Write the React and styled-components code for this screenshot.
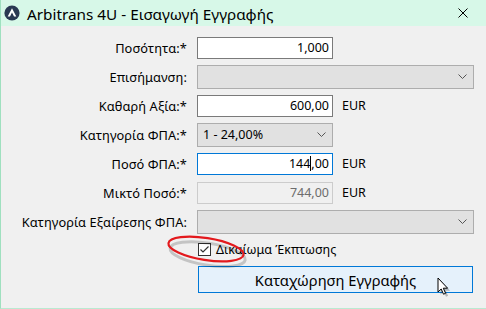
import React from "react";
import styled, { createGlobalStyle } from "styled-components";

const Global = createGlobalStyle`
  html, body { margin: 0; padding: 0; background: #f0f0f0; }
  body { font-family: "Noto Sans", "Open Sans", sans-serif; }
`;

const Window = styled.div`
  position: relative;
  width: 486px;
  height: 309px;
  box-sizing: border-box;
  border-left: 1px solid #9fe0bf;
  border-bottom: 1px solid #b9ead1;
  background: #f0f0f0;
  overflow: hidden;
`;

const TitleBar = styled.div`
  height: 26px;
  background: #d7f8e8;
  display: flex;
  align-items: center;
  padding-left: 3px;
`;

const TitleText = styled.div`
  font-family: "Noto Sans", sans-serif;
  font-size: 15.3px;
  color: #000;
  margin-left: 7px;
  margin-top: 1px;
  flex: 1;
`;

const CloseBtn = styled.div`
  width: 46px;
  height: 26px;
  display: flex;
  align-items: center;
  justify-content: center;
`;

const Form = styled.div`
  padding-top: 7px;
  display: flex;
  flex-direction: column;
`;

const Row = styled.div`
  height: 29px;
  display: flex;
  align-items: center;
`;

const Label = styled.div`
  width: 186px;
  text-align: right;
  font-size: 12.8px;
  letter-spacing: 0.1px;
  color: #000;
  margin-right: 10px;
  white-space: nowrap;
`;

const Input = styled.div`
  box-sizing: border-box;
  width: 136px;
  height: 22px;
  background: ${(p) => (p.$disabled ? "#f0f0f0" : "#fff")};
  border: 1px solid ${(p) => (p.$focus ? "#0078d7" : p.$disabled ? "#cccccc" : "#7a7a7a")};
  color: ${(p) => (p.$disabled ? "#6d6d6d" : "#000")};
  font-size: 12.5px;
  display: flex;
  align-items: center;
  justify-content: flex-end;
  padding-right: 3px;
`;

const Caret = styled.span`
  display: inline-block;
  width: 1px;
  height: 15px;
  background: #000;
`;

const Select = styled.div`
  box-sizing: border-box;
  width: ${(p) => (p.$wide ? "277px" : "136px")};
  height: 24px;
  background: #e1e1e1;
  border: 1px solid #adadad;
  font-size: 12.5px;
  color: #000;
  display: flex;
  align-items: center;
  padding-left: 5px;
  padding-right: 6px;
`;

const SelectText = styled.span`
  flex: 1;
`;

const Unit = styled.span`
  font-size: 12.5px;
  color: #000;
  margin-left: 9px;
`;

const CheckRow = styled.div`
  height: 27px;
  display: flex;
  align-items: center;
  padding-left: 197px;
`;

const Box = styled.div`
  box-sizing: border-box;
  width: 13px;
  height: 13px;
  border: 1px solid #333;
  background: #fff;
  display: flex;
  align-items: center;
  justify-content: center;
`;

const CheckLabel = styled.span`
  font-size: 12.5px;
  color: #000;
  margin-left: 5px;
`;

const ButtonRow = styled.div`
  padding-left: 197px;
  margin-top: 3px;
`;

const Button = styled.div`
  box-sizing: border-box;
  width: 275px;
  height: 27px;
  background: #e5f1fb;
  border: 1px solid #0078d7;
  display: flex;
  align-items: center;
  justify-content: center;
  font-size: 14.7px;
  color: #000;
`;

const Annotation = styled.svg`
  position: absolute;
  left: 160px;
  top: 228px;
  pointer-events: none;
`;

const Cursor = styled.svg`
  position: absolute;
  left: 435px;
  top: 276px;
`;

const Chevron = () => (
  <svg width="9" height="5" viewBox="0 0 9 5">
    <path d="M0.5 0.5 L4.5 4.5 L8.5 0.5" fill="none" stroke="#555" strokeWidth="1" />
  </svg>
);

export default function App() {
  return (
    <>
      <Global />
      <Window>
        <TitleBar>
          <svg width="16" height="16" viewBox="0 0 16 16">
            <circle cx="8" cy="8" r="7.6" fill="#2a3852" />
            <path d="M8 3.2 L12.3 11.6 L10 11.6 L8 7.6 L6 11.6 L3.7 11.6 Z" fill="#fff" />
            <path d="M6.6 11.6 L9.4 11.6 L8 9 Z" fill="#2a3852" />
          </svg>
          <TitleText>Arbitrans 4U - Εισαγωγή Εγγραφής</TitleText>
          <CloseBtn>
            <svg width="10" height="10" viewBox="0 0 10 10">
              <path d="M0.5 0.5 L9.5 9.5 M9.5 0.5 L0.5 9.5" stroke="#000" strokeWidth="1" />
            </svg>
          </CloseBtn>
        </TitleBar>
        <Form>
          <Row>
            <Label>Ποσότητα:*</Label>
            <Input>1,000</Input>
          </Row>
          <Row>
            <Label>Επισήμανση:</Label>
            <Select $wide>
              <SelectText />
              <Chevron />
            </Select>
          </Row>
          <Row>
            <Label>Καθαρή Αξία:*</Label>
            <Input>600,00</Input>
            <Unit>EUR</Unit>
          </Row>
          <Row>
            <Label>Κατηγορία ΦΠΑ:*</Label>
            <Select>
              <SelectText>1 - 24,00%</SelectText>
              <Chevron />
            </Select>
          </Row>
          <Row>
            <Label>Ποσό ΦΠΑ:*</Label>
            <Input $focus>
              144<Caret />,00
            </Input>
            <Unit>EUR</Unit>
          </Row>
          <Row>
            <Label>Μικτό Ποσό:*</Label>
            <Input $disabled>744,00</Input>
            <Unit>EUR</Unit>
          </Row>
          <Row>
            <Label>Κατηγορία Εξαίρεσης ΦΠΑ:</Label>
            <Select $wide>
              <SelectText />
              <Chevron />
            </Select>
          </Row>
          <CheckRow>
            <Box>
              <svg width="11" height="11" viewBox="0 0 11 11">
                <path d="M1.5 5.5 L4 8 L9.5 2.5" fill="none" stroke="#333" strokeWidth="1.2" />
              </svg>
            </Box>
            <CheckLabel>Δικαίωμα Έκπτωσης</CheckLabel>
          </CheckRow>
          <ButtonRow>
            <Button>Καταχώρηση Εγγραφής</Button>
          </ButtonRow>
        </Form>
        <Annotation width="100" height="44" viewBox="0 0 100 44">
          <ellipse cx="46" cy="24" rx="38" ry="11" fill="none" stroke="rgba(0,0,0,0.18)" strokeWidth="3" transform="rotate(9 46 24) translate(1 2)" />
          <ellipse cx="45" cy="21" rx="38" ry="11" fill="none" stroke="#e3191d" strokeWidth="2.2" transform="rotate(9 45 21)" />
        </Annotation>
        <Cursor width="16" height="22" viewBox="0 0 16 22">
          <path d="M3 3 L3 17 L6.2 14 L8.5 19.2 L10.6 18.3 L8.3 13.2 L12.6 13.2 Z" fill="rgba(0,0,0,0.25)" transform="translate(1.5 1.5)" />
          <path d="M2 2 L2 16 L5.2 13 L7.5 18.2 L9.6 17.3 L7.3 12.2 L11.6 12.2 Z" fill="#fff" stroke="#000" strokeWidth="1" strokeLinejoin="round" />
        </Cursor>
      </Window>
    </>
  );
}
